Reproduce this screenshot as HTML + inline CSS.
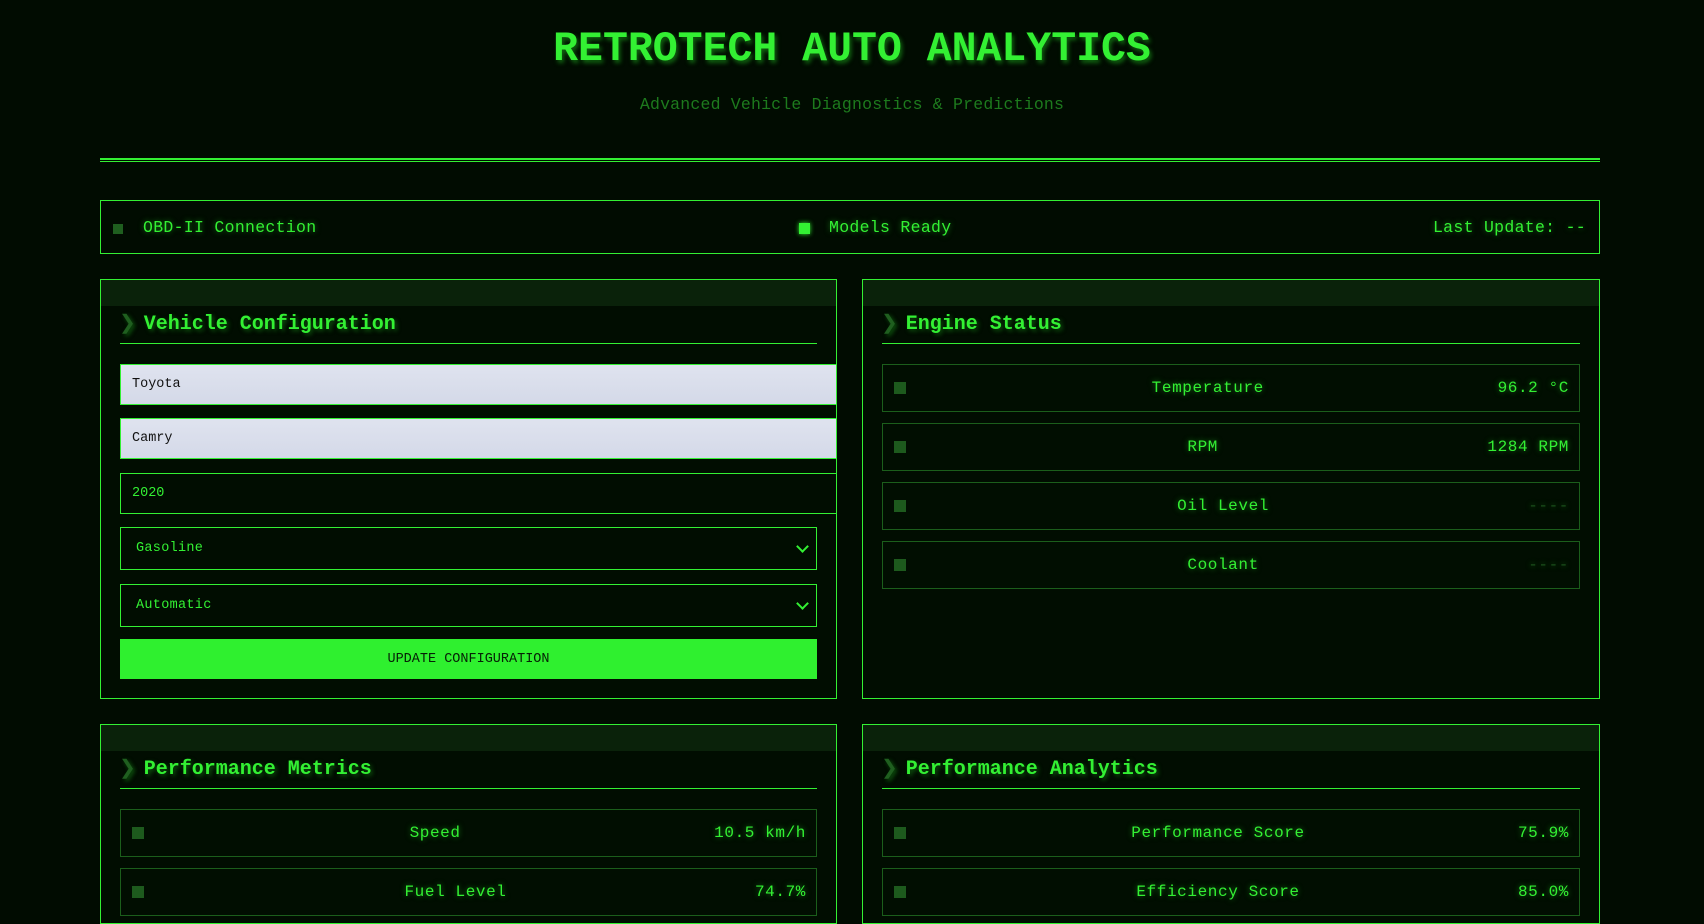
<!DOCTYPE html>
<html><head><meta charset="utf-8"><style>
*{box-sizing:border-box;margin:0;padding:0}
body{width:1704px;height:892px;overflow:hidden;background:#010c01;font-family:"Liberation Mono",monospace;color:#33f033;position:relative}
.a{position:absolute}
.t{text-shadow:0 0 6px rgba(51,240,51,.5)}
h1{position:absolute;left:0;width:1704px;top:26px;text-align:center;font-size:41.5px;font-weight:bold;letter-spacing:0;color:#33f033;text-shadow:2px 3px 4px rgba(20,120,20,.8)}
.sub{position:absolute;left:0;width:1704px;top:95px;text-align:center;font-size:16.5px;color:#1d7a1d;letter-spacing:.2px}
.line{position:absolute;left:100px;width:1500px;height:2px;background:#33f033}
.box{position:absolute;border:1px solid #33f033}
.panel{position:absolute;border:1px solid #33f033;background:#010d01}
.band{position:absolute;left:0;right:0;top:0;height:26px;background:#0a220a}
.ptitle{position:absolute;left:18px;top:30px;font-size:20px;font-weight:bold;color:#33f033;text-shadow:2px 2px 4px rgba(20,120,20,.7)}
.ptitle span{color:#1f5f1f;margin-right:8px;font-weight:normal}
.ul{position:absolute;left:19px;right:19px;height:1px;background:#33f033;top:63px}
.row{position:absolute;left:19px;right:19px;height:48px;border:1px solid #1b5e1b;background:#010e01;font-size:16px;display:flex;align-items:center;padding:0 10px 0 11px}
.sq{width:12px;height:12px;background:#1d5a1d;flex:none}
.lbl{flex:1;text-align:center;letter-spacing:.6px;padding-left:12px}
.val{letter-spacing:.6px;flex:none}
.dash{color:#1a4f1a}
.inp{position:absolute;left:19px;height:41px;font-size:13.5px;padding:12px 11px;border:1px solid #33f033}
.light{background:linear-gradient(#dfe3ef,#d4d9e8);color:#111}
.sel{position:absolute;left:19px;right:19px;height:43px;border:1px solid #33f033;font-size:13.5px;padding:13px 15px;letter-spacing:.3px}
.sel:after{content:"";position:absolute;right:9px;top:14px;width:7px;height:7px;border-right:2px solid #33f033;border-bottom:2px solid #33f033;transform:rotate(45deg)}
.btn{position:absolute;left:19px;right:19px;height:40px;background:#2ff02f;color:#062006;font-size:13.5px;text-align:center;line-height:42px}
</style></head><body>
<h1>RETROTECH AUTO ANALYTICS</h1>
<div class="sub">Advanced Vehicle Diagnostics &amp; Predictions</div>
<div class="line" style="top:158px"></div>
<div class="line" style="top:161px;height:1px"></div>

<div class="box" style="left:100px;top:200px;width:1500px;height:54px">
 <div class="a" style="left:12px;top:23px;width:10px;height:10px;background:#1f5f1f"></div>
 <div class="a t" style="left:42px;top:17px;font-size:16.5px;letter-spacing:.3px">OBD-II Connection</div>
 <div class="a" style="left:698px;top:22px;width:11px;height:11px;background:#33f033;box-shadow:0 0 5px #33f033"></div>
 <div class="a t" style="left:728px;top:17px;font-size:16.5px;letter-spacing:.3px">Models Ready</div>
 <div class="a t" style="right:13px;top:17px;font-size:16.5px;letter-spacing:.3px">Last Update: --</div>
</div>

<div class="panel" style="left:100px;top:279px;width:737px;height:420px">
 <div class="band"></div>
 <div class="ptitle"><span>❯</span>Vehicle Configuration</div>
 <div class="ul"></div>
 <div class="inp light" style="top:84px;right:-1px">Toyota</div>
 <div class="inp light" style="top:138px;right:-1px">Camry</div>
 <div class="inp" style="top:193px;right:-1px">2020</div>
 <div class="sel" style="top:247px">Gasoline</div>
 <div class="sel" style="top:304px">Automatic</div>
 <div class="btn" style="top:359px">UPDATE CONFIGURATION</div>
</div>

<div class="panel" style="left:862px;top:279px;width:738px;height:420px">
 <div class="band"></div>
 <div class="ptitle"><span>❯</span>Engine Status</div>
 <div class="ul"></div>
 <div class="row t" style="top:84px"><div class="sq"></div><div class="lbl">Temperature</div><div class="val">96.2 °C</div></div>
 <div class="row t" style="top:143px"><div class="sq"></div><div class="lbl">RPM</div><div class="val">1284 RPM</div></div>
 <div class="row t" style="top:202px"><div class="sq"></div><div class="lbl">Oil Level</div><div class="val dash">----</div></div>
 <div class="row t" style="top:261px"><div class="sq"></div><div class="lbl">Coolant</div><div class="val dash">----</div></div>
</div>

<div class="panel" style="left:100px;top:724px;width:737px;height:200px">
 <div class="band"></div>
 <div class="ptitle"><span>❯</span>Performance Metrics</div>
 <div class="ul"></div>
 <div class="row t" style="top:84px"><div class="sq"></div><div class="lbl">Speed</div><div class="val">10.5 km/h</div></div>
 <div class="row t" style="top:143px"><div class="sq"></div><div class="lbl">Fuel Level</div><div class="val">74.7%</div></div>
</div>

<div class="panel" style="left:862px;top:724px;width:738px;height:200px">
 <div class="band"></div>
 <div class="ptitle"><span>❯</span>Performance Analytics</div>
 <div class="ul"></div>
 <div class="row t" style="top:84px"><div class="sq"></div><div class="lbl">Performance Score</div><div class="val">75.9%</div></div>
 <div class="row t" style="top:143px"><div class="sq"></div><div class="lbl">Efficiency Score</div><div class="val">85.0%</div></div>
</div>
</body></html>
